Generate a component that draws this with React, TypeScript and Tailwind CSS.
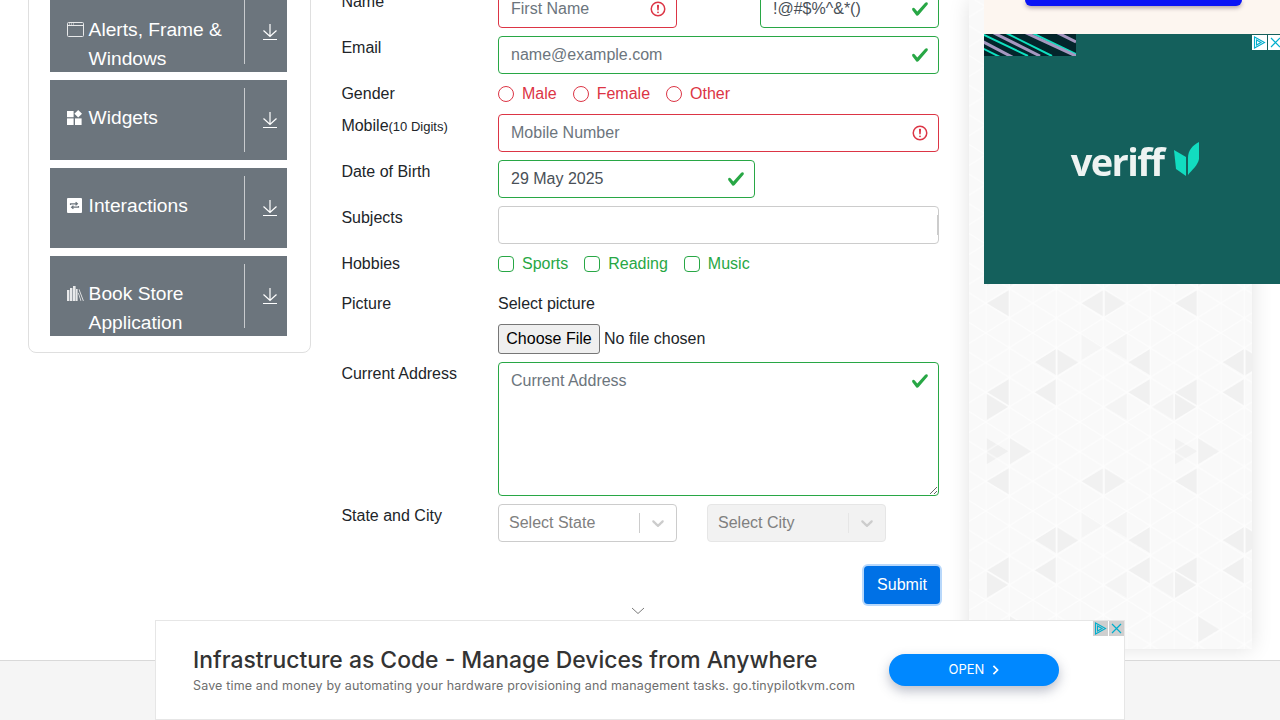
import type { ReactNode } from "react";

const green = "#28a745";
const red = "#dc3545";

function ValidIcon() {
  return (
    <svg viewBox="0 0 8 8" className="w-[18px] h-[18px]">
      <path
        fill={green}
        d="M2.3 6.73L.6 4.53c-.4-1.04.46-1.4 1.1-.8l1.1 1.4 3.4-3.8c.6-.63 1.6-.27 1.2.7l-4 4.6c-.43.5-.8.4-1.1.1z"
      />
    </svg>
  );
}

function InvalidIcon() {
  return (
    <svg viewBox="0 0 12 12" fill="none" stroke={red} className="w-[18px] h-[18px]">
      <circle cx="6" cy="6" r="4.5" />
      <path strokeLinejoin="round" d="M5.8 3.6h.4L6 6.5z" />
      <circle cx="6" cy="8.2" r=".6" fill={red} stroke="none" />
    </svg>
  );
}

function DownloadIcon() {
  return (
    <svg viewBox="0 0 16 18" fill="none" stroke="white" strokeWidth="1.2" className="w-[16px] h-[18px]">
      <path d="M8 1v12.5M1.5 7.5L8 13.5l6.5-6M1 16.5h14" />
    </svg>
  );
}

function WindowIcon() {
  return (
    <svg viewBox="0 0 17 15" className="w-[17px] h-[15px]" fill="none" stroke="#e8e9ea">
      <rect x=".5" y=".5" width="16" height="14" rx="1" />
      <path d="M.5 3.5h16" />
      <path d="M2 2h1M4 2h1M6 2h1" strokeWidth="1" />
    </svg>
  );
}

function WidgetsIcon() {
  return (
    <svg viewBox="0 0 15 15" className="w-[15px] h-[15px]" fill="white">
      <rect x="0" y="1" width="6.6" height="6.2" />
      <rect x="0" y="8.4" width="6.6" height="6.6" />
      <rect x="8" y="8.4" width="6.6" height="6.6" />
      <path d="M11.2 0l3.8 3.8-3.8 3.8-3.8-3.8z" />
    </svg>
  );
}

function InteractionsIcon() {
  return (
    <svg viewBox="0 0 15 15" className="w-[15px] h-[15px]">
      <rect width="15" height="15" rx="1" fill="white" />
      <path
        d="M3.5 7V5.8h6.5M8.6 4.2L10.4 5.8 8.6 7.4M11.5 8v1.2H5M6.4 7.6L4.6 9.2l1.8 1.6"
        fill="none"
        stroke="#6c757d"
        strokeWidth="1.2"
      />
    </svg>
  );
}

function BooksIcon() {
  return (
    <svg viewBox="0 0 17 15" className="w-[17px] h-[15px]" fill="#e8e9ea">
      <rect x="0" y="4" width="2.4" height="11" />
      <rect x="3" y="2" width="2.4" height="13" />
      <rect x="6" y="0" width="2.6" height="15" />
      <rect x="9" y="3" width="1.6" height="12" />
      <path d="M11.6 3.5l.8-.3 4.4 11.6-.8.3zM11 7l.7-.2 2.6 8-.7.2z" />
    </svg>
  );
}

function Chevron({ color }: { color: string }) {
  return (
    <svg viewBox="0 0 20 20" className="w-[20px] h-[20px]" fill={color}>
      <path d="M4.516 7.548c.436-.446 1.043-.481 1.576 0L10 11.295l3.908-3.747c.533-.481 1.141-.446 1.574 0 .436.445.408 1.197 0 1.615-.406.418-4.695 4.502-4.695 4.502a1.095 1.095 0 0 1-1.576 0S5.124 9.581 4.516 9.163c-.409-.418-.436-1.17 0-1.615z" />
    </svg>
  );
}

function MenuItem({ icon, label }: { icon: ReactNode; label: ReactNode }) {
  return (
    <div className="bg-[#6c757d] text-white flex h-[80px] overflow-hidden">
      <div className="w-[194px] pl-[17px] pt-[23px] flex text-[19.2px] leading-[29px] shrink-0">
        <span className="w-[21.6px] shrink-0 h-[29px] flex items-center">{icon}</span>
        <span>{label}</span>
      </div>
      <div className="w-px bg-[#c8cbce] my-[8px] shrink-0" />
      <div className="flex-1 flex justify-center pl-[7px] pt-[31px]">
        <DownloadIcon />
      </div>
    </div>
  );
}

const fieldBase =
  "w-full h-[38px] rounded-[4px] border bg-white pl-[12px] pr-[36px] text-[16px] text-[#495057] placeholder:text-[#6c757d] outline-none";

function Field({
  placeholder,
  value,
  state,
  width,
}: {
  placeholder?: string;
  value?: string;
  state: "ok" | "bad";
  width: string;
}) {
  return (
    <div className={`relative ${width}`}>
      <input
        readOnly
        placeholder={placeholder}
        value={value ?? ""}
        className={`${fieldBase} ${state === "ok" ? "border-[#28a745]" : "border-[#dc3545]"}`}
      />
      <span className="absolute right-[10px] top-[10px]">{state === "ok" ? <ValidIcon /> : <InvalidIcon />}</span>
    </div>
  );
}

function Row({ label, children, className }: { label: ReactNode; children: ReactNode; className?: string }) {
  return (
    <div className={`flex mb-[8px] ${className ?? ""}`}>
      <div className="w-[157px] shrink-0 leading-[24px] pl-[0.4px]">{label}</div>
      <div className="flex-1 min-w-0">{children}</div>
    </div>
  );
}

function Radio({ label }: { label: string }) {
  return (
    <span className="flex items-center text-[#dc3545] mr-[16px]">
      <span className="w-[16px] h-[16px] rounded-full border border-[#dc3545] mr-[8px]" />
      {label}
    </span>
  );
}

function Check({ label }: { label: string }) {
  return (
    <span className="flex items-center text-[#28a745] mr-[16px]">
      <span className="w-[16px] h-[16px] rounded-[4px] border border-[#28a745] mr-[8px]" />
      {label}
    </span>
  );
}

function SelectBox({ label, disabled }: { label: string; disabled?: boolean }) {
  return (
    <div
      className={`w-[179px] h-[38px] rounded-[4px] border flex items-center ${
        disabled ? "bg-[#f2f2f2] border-[#e6e6e6]" : "bg-white border-[#cccccc]"
      }`}
    >
      <span className="flex-1 pl-[10px] text-[#808080]">{label}</span>
      <span className={`w-px h-[20px] ${disabled ? "bg-[#e6e6e6]" : "bg-[#cccccc]"}`} />
      <span className="px-[8px] flex">
        <Chevron color="#cccccc" />
      </span>
    </div>
  );
}

// triangles read off the tile, in crop pixels: [base x, apex x, centre y, shade]
const shapes: [number, number, number, string][] = [
  [147, 80, 70, "#f0f0f0"],
  [430, 365, 70, "#f1f1f1"],
  [435, 500, 70, "#f1f1f1"],
  [712, 645, 70, "#f0f0f0"],
  [80, 145, -20, "#f0f0f0"],
  [645, 712, -20, "#f2f2f2"],
  [365, 430, 200, "#f5f5f5"],
  [500, 435, 200, "#f4f4f4"],
  [288, 225, 246, "#f0f0f0"],
  [293, 357, 246, "#f0f0f0"],
  [570, 505, 246, "#f0f0f0"],
  [852, 788, 246, "#f0f0f0"],
  [857, 920, 246, "#f0f0f0"],
  [147, 82, 337, "#f0f0f0"],
  [288, 225, 337, "#f0f0f0"],
  [570, 505, 337, "#f0f0f0"],
  [712, 645, 337, "#f0f0f0"],
  [852, 788, 337, "#f0f0f0"],
  [80, 145, 380, "#f0f0f0"],
  [500, 435, 380, "#f4f4f4"],
  [645, 710, 380, "#f0f0f0"],
  [640, 577, 380, "#f4f4f4"],
  [150, 215, 513, "#f1f1f1"],
  [715, 780, 513, "#f1f1f1"],
];

function TrianglePattern() {
  const polys: { points: string; fill: string }[] = [];
  for (let k = -2; k <= 1; k++) {
    for (const [b, a, c, fill] of shapes) {
      const bx = b / 3 - 9;
      const ax = a / 3 - 9;
      const cy = c / 3 + 280 + k * 178;
      polys.push({ points: `${bx},${cy - 13} ${bx},${cy + 13} ${ax},${cy}`, fill });
    }
  }
  return (
    <svg className="absolute inset-0 w-full h-full" width="283" height="649">
      <defs>
        <pattern id="lattice" x="16.7" y="6.6" width="47" height="29.67" patternUnits="userSpaceOnUse">
          <path
            d="M0 0L23.5 14.83L47 0M0 29.67L23.5 14.83L47 29.67M23.5 0V29.67M0 0V29.67"
            fill="none"
            stroke="white"
            strokeOpacity="0.8"
            strokeWidth="1"
          />
        </pattern>
      </defs>
      <rect width="283" height="649" fill="#f9f9f9" />
      {polys.map((p, i) => (
        <polygon key={i} points={p.points} fill={p.fill} />
      ))}
      <rect width="283" height="649" fill="url(#lattice)" />
    </svg>
  );
}

function AdPlay({ bg }: { bg: string }) {
  return (
    <span className={`w-[15px] h-[15px] flex items-center justify-center ${bg}`}>
      <svg viewBox="0 0 15 15" className="w-[15px] h-[15px]" fill="none" stroke="#00aecd" strokeWidth="1.1">
        <path d="M2.5 2v11l10-5.5z" />
        <path d="M4.5 5v5l4.5-2.5z" />
      </svg>
    </span>
  );
}

function AdClose({ bg }: { bg: string }) {
  return (
    <span className={`w-[15px] h-[15px] flex items-center justify-center ${bg}`}>
      <svg viewBox="0 0 15 15" className="w-[15px] h-[15px]" fill="none" stroke="#00aecd" strokeWidth="1.2">
        <path d="M3 3l9 9M12 3l-9 9" />
      </svg>
    </span>
  );
}

export default function App() {
  return (
    <div className="relative w-[1280px] h-[720px] overflow-hidden bg-white text-[16px] text-[#212529] font-['Liberation_Sans',Arial,sans-serif]">
      <div className="flex items-start pl-[28px]">
        {/* Sidebar */}
        <div className="w-[283px] -mt-[28px] shrink-0 border border-[#dfdfdf] rounded-b-[8px] pt-[19px] pb-[16px] pl-[21px] pr-[23px] flex flex-col gap-[8px]">
          <MenuItem icon={<WindowIcon />} label="Alerts, Frame & Windows" />
          <MenuItem icon={<WidgetsIcon />} label="Widgets" />
          <MenuItem icon={<InteractionsIcon />} label="Interactions" />
          <MenuItem icon={<BooksIcon />} label="Book Store Application" />
        </div>

        {/* Form */}
        <div className="w-[598px] ml-[30px] -mt-[10px] shrink-0">
          <Row label="Name">
            <div className="flex justify-between">
              <Field placeholder="First Name" state="bad" width="w-[179px]" />
              <Field value="!@#$%^&*()" state="ok" width="w-[179px]" />
            </div>
          </Row>
          <Row label="Email">
            <Field placeholder="name@example.com" state="ok" width="w-full" />
          </Row>
          <Row label="Gender">
            <div className="flex leading-[24px]">
              <Radio label="Male" />
              <Radio label="Female" />
              <Radio label="Other" />
            </div>
          </Row>
          <Row
            label={
              <span>
                Mobile<small className="text-[13px]">(10 Digits)</small>
              </span>
            }
          >
            <Field placeholder="Mobile Number" state="bad" width="w-full" />
          </Row>
          <Row label="Date of Birth">
            <Field value="29 May 2025" state="ok" width="w-[257px]" />
          </Row>
          <Row label="Subjects">
            <div className="relative h-[38px] rounded-[4px] border border-[#cccccc] bg-white">
              <span className="absolute right-0 top-[8px] w-px h-[20px] bg-[#cccccc]" />
            </div>
          </Row>
          <Row label="Hobbies" className="mb-[16px]">
            <div className="flex leading-[24px]">
              <Check label="Sports" />
              <Check label="Reading" />
              <Check label="Music" />
            </div>
          </Row>
          <Row label="Picture">
            <div className="leading-[24px] mb-[8px]">Select picture</div>
            <input
              type="file"
              className="block w-full h-[30px] text-[16px] text-[#212529] file:h-[30px] file:w-[102px] file:px-[6px] file:mr-[4px] file:bg-[#efefef] file:border file:border-[#767676] file:rounded-[3px] file:text-black"
            />
          </Row>
          <Row label="Current Address">
            <div className="relative h-[134px]">
              <textarea
                readOnly
                placeholder="Current Address"
                className="block w-full h-[134px] rounded-[4px] border border-[#28a745] bg-white pl-[12px] pr-[36px] py-[6px] leading-[24px] placeholder:text-[#6c757d] outline-none"
              />
              <span className="absolute right-[10px] top-[10px]">
                <ValidIcon />
              </span>
            </div>
          </Row>
          <Row label="State and City">
            <div className="flex gap-[30px]">
              <SelectBox label="Select State" />
              <SelectBox label="Select City" disabled />
            </div>
          </Row>
          <div className="flex justify-end pt-[16px]">
            <button className="w-[76px] h-[38px] rounded-[4px] bg-[#0071e6] text-white ring-2 ring-[#b8d8fb] mr-[-1px]">
              Submit
            </button>
          </div>
          <div className="flex justify-center pr-[4px] pt-[3px]">
            <svg viewBox="0 0 14 8" fill="none" stroke="#7a7a7a" strokeWidth="1" className="w-[14px] h-[8px]">
              <path d="M1 1l6 5.5L13 1" />
            </svg>
          </div>
        </div>

        {/* Right rail */}
        <div className="relative w-[283px] h-[649px] ml-[30px] shrink-0 shadow-[0_0_20px_rgba(0,0,0,0.12)]">
          <TrianglePattern />
        </div>
      </div>

      {/* Top right adverts */}
      <div className="absolute left-[984px] top-0 w-[296px] h-[34px] bg-[#fdf6f0]">
        <div className="ml-[41px] w-[217px] h-[6px] rounded-b-[6px] bg-[#0a14f5] shadow-[0_2px_4px_rgba(60,40,60,0.4)]" />
      </div>
      <div className="absolute left-[984px] top-[34px] w-[296px] h-[250px] bg-[#14605c] flex items-center justify-center overflow-hidden">
        <svg className="absolute left-0 top-0" width="92" height="22" viewBox="0 0 92 22">
          <rect width="92" height="22" fill="#03252b" />
          <g fill="none">
            <path d="M-4 -1L44 22M20 -2L68 22M-6 12L18 24M46 -2L92 20" stroke="#0fe0c0" strokeWidth="2" />
            <path d="M-8 4L30 24M6 -3L56 22M38 -3L92 22M70 -3L92 8" stroke="#a597c0" strokeWidth="3" />
          </g>
        </svg>
        <span className="absolute right-[-3px] top-[1px] flex gap-px">
          <AdPlay bg="bg-white" />
          <AdClose bg="bg-white" />
        </span>
        <div className="flex items-end gap-[11px] mt-[2px] ml-[6px] blur-[0.7px]">
          <span className="font-['Open_Sans',sans-serif] font-bold text-[38px] leading-[34px] tracking-[-1.6px] text-[#eef3f2]">
            veriff
          </span>
          <svg viewBox="0 0 25 34" className="w-[25px] h-[34px] mb-[2px]" fill="#12dcc0">
            <path d="M0 8l12 7v19L2 27z" />
            <path d="M25 0v17c-1 6-7 11-11 16V16C14 8 19 3 25 0z" />
          </svg>
        </div>
      </div>

      {/* Footer strip */}
      <div className="absolute left-0 right-0 bottom-0 h-[60px] bg-[#f5f5f5] border-t border-[#d9d9d9]" />

      {/* Bottom advert */}
      <div className="absolute left-[155px] top-[620px] w-[970px] h-[100px] bg-white border border-[#e6e6e6] flex items-center pl-[37px]">
        <span className="absolute right-0 top-0 flex gap-px">
          <AdPlay bg="bg-[#cfcfcf]" />
          <AdClose bg="bg-[#cfcfcf]" />
        </span>
        <div className="w-[696px] shrink-0 pt-[1px]">
          <div className="font-['Inter',sans-serif] font-medium text-[22.9px] leading-[30px] text-[#333333]">
            Infrastructure as Code - Manage Devices from Anywhere
          </div>
          <div className="font-['Inter',sans-serif] text-[12.5px] leading-[20px] mt-[1px] tracking-[0.155px] text-[#6e6e6e]">
            Save time and money by automating your hardware provisioning and management tasks. go.tinypilotkvm.com
          </div>
        </div>
        <div className="w-[170px] h-[32px] rounded-full bg-[#0088ff] text-white flex items-center justify-center gap-[8px] text-[13px] shadow-[0_5px_12px_rgba(60,70,100,0.35)] font-['Inter',sans-serif]">
          OPEN
          <svg viewBox="0 0 8 12" fill="none" stroke="white" strokeWidth="2" className="w-[7px] h-[10px]">
            <path d="M1.5 1l5 5-5 5" />
          </svg>
        </div>
      </div>
    </div>
  );
}
